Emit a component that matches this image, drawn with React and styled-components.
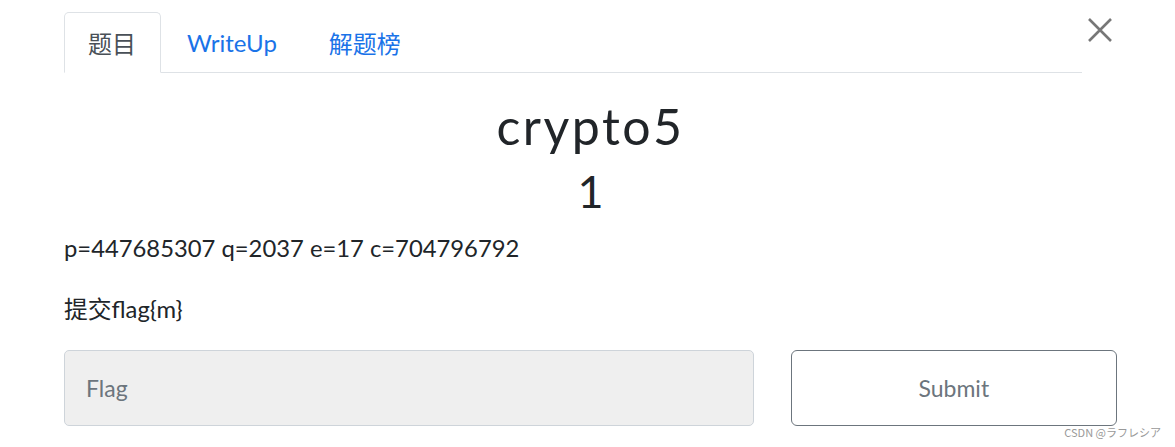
import styled, { createGlobalStyle } from "styled-components";

const GlobalStyle = createGlobalStyle`
  html, body {
    margin: 0;
    padding: 0;
    background: #fff;
  }
  body {
    font-family: Lato, "Noto Sans CJK SC", sans-serif;
    color: #212529;
  }
`;

const Page = styled.div`
  width: 1175px;
  height: 447px;
  box-sizing: border-box;
  padding: 12px 58px 0 64px;
  position: relative;
  overflow: hidden;
`;

const Header = styled.div`
  display: flex;
  align-items: flex-start;
`;

const Tabs = styled.div`
  display: flex;
  width: 1018px;
  border-bottom: 1px solid #dee2e6;
`;

const Tab = styled.div`
  padding: 0 25px;
  height: 61px;
  display: flex;
  align-items: center;
  font-size: 24px;
  color: ${(props) => (props.active ? "#495057" : "#1a73e8")};
  border: 1px solid ${(props) => (props.active ? "#dee2e6" : "transparent")};
  border-bottom-color: ${(props) => (props.active ? "#fff" : "transparent")};
  border-radius: 5px 5px 0 0;
  margin-bottom: -1px;
  box-sizing: border-box;
  &:first-child {
    padding: 0 24px 0 23px;
  }
`;

const Close = styled.div`
  margin: 6px 0 0 6px;
  width: 24px;
  height: 24px;
`;

const Title = styled.h1`
  margin: 21px 0 0;
  text-align: center;
  font-size: 50px;
  font-weight: 400;
  letter-spacing: 2.5px;
  line-height: 64px;
  color: #212529;
`;

const Points = styled.div`
  margin-top: 7px;
  text-align: center;
  font-size: 45px;
  line-height: 52px;
  color: #212529;
`;

const Para = styled.p`
  margin: ${(props) => props.margin || "0"};
  font-size: 23.8px;
  line-height: 34px;
  color: #212529;
`;

const Form = styled.div`
  display: flex;
  gap: 37px;
  margin-top: 24px;
`;

const Input = styled.input`
  width: 691px;
  height: 76px;
  box-sizing: border-box;
  border: 1px solid #ced4da;
  border-radius: 5px;
  background: #efefef;
  padding: 0 21px;
  font-family: Lato, sans-serif;
  font-size: 23px;
  color: #495057;
  outline: none;
  &::placeholder {
    color: #6c757d;
  }
`;

const Button = styled.button`
  width: 327px;
  height: 76px;
  box-sizing: border-box;
  border: 1px solid #6c757d;
  border-radius: 6px;
  background: #fff;
  font-family: Lato, sans-serif;
  font-size: 23px;
  color: #6c757d;
`;

const Watermark = styled.div`
  position: absolute;
  right: 14px;
  bottom: 7px;
  font-family: "Noto Sans CJK JP", sans-serif;
  font-size: 11px;
  color: #999;
`;

const App = () => {
  return (
    <>
      <GlobalStyle />
      <Page>
        <Header>
          <Tabs>
            <Tab active>题目</Tab>
            <Tab>WriteUp</Tab>
            <Tab>解题榜</Tab>
          </Tabs>
          <Close>
            <svg width="24" height="24" viewBox="0 0 24 24">
              <path d="M1 1L23 23M23 1L1 23" stroke="#777" strokeWidth="2.6" fill="none" />
            </svg>
          </Close>
        </Header>
        <Title>crypto5</Title>
        <Points>1</Points>
        <Para margin="14px 0 0">p=447685307 q=2037 e=17 c=704796792</Para>
        <Para margin="27px 0 0">提交flag{"{m}"}</Para>
        <Form>
          <Input placeholder="Flag" />
          <Button>Submit</Button>
        </Form>
        <Watermark>CSDN @ラフレシア</Watermark>
      </Page>
    </>
  );
};

export default App;
